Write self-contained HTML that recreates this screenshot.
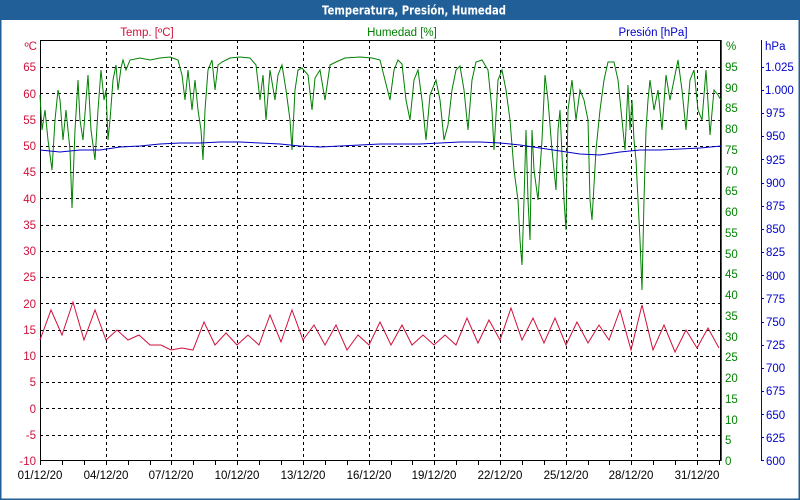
<!DOCTYPE html>
<html><head><meta charset="utf-8"><style>
html,body{margin:0;padding:0;width:800px;height:500px;overflow:hidden;background:#fff}
</style></head><body>
<svg width="800" height="500" xmlns="http://www.w3.org/2000/svg" font-family="Liberation Sans, sans-serif" font-size="11.5">
<rect x="0" y="0" width="800" height="500" fill="#fff"/>
<rect x="0" y="0" width="800" height="20" fill="#215f98"/>
<rect x="0" y="0" width="1.5" height="500" fill="#215f98"/>
<rect x="798.5" y="0" width="1.5" height="500" fill="#215f98"/>
<rect x="0" y="498.5" width="800" height="1.5" fill="#215f98"/>
<text x="414" y="14.5" fill="#fff" font-weight="bold" font-size="12" font-family="DejaVu Sans, sans-serif" text-anchor="middle" textLength="184" lengthAdjust="spacingAndGlyphs">Temperatura, Presión, Humedad</text>
<text x="147" y="36" fill="#d0103a" text-anchor="middle">Temp. [ºC]</text>
<text x="402" y="36" fill="#008000" text-anchor="middle">Humedad [%]</text>
<text x="653" y="36" fill="#0000c8" text-anchor="middle">Presión [hPa]</text>
<g stroke="#000" stroke-width="1" stroke-dasharray="3,3" fill="none">
<path d="M40 67.5H721M40 93.5H721M40 120.5H721M40 146.5H721M40 172.5H721M40 198.5H721M40 225.5H721M40 251.5H721M40 277.5H721M40 303.5H721M40 330.5H721M40 356.5H721M40 382.5H721M40 408.5H721M40 435.5H721"/>
<path d="M106.5 40V461M171.5 40V461M237.5 40V461M303.5 40V461M369.5 40V461M434.5 40V461M500.5 40V461M566.5 40V461M631.5 40V461M697.5 40V461"/>
</g>
<rect x="40.5" y="40.5" width="680" height="420" fill="none" stroke="#000"/>
<path stroke="#000" d="M62.5 461v4M84.5 461v4M128.5 461v4M150.5 461v4M193.5 461v4M215.5 461v4M259.5 461v4M281.5 461v4M325.5 461v4M347.5 461v4M391.5 461v4M412.5 461v4M456.5 461v4M478.5 461v4M522.5 461v4M544.5 461v4M588.5 461v4M609.5 461v4M653.5 461v4M675.5 461v4M40.5 461v4M106.5 461v4M171.5 461v4M237.5 461v4M303.5 461v4M369.5 461v4M434.5 461v4M500.5 461v4M566.5 461v4M631.5 461v4M697.5 461v4M719.5 461v4"/>
<g fill="#000" text-anchor="middle">
<text x="40" y="479">01/12/20</text><text x="106" y="479">04/12/20</text><text x="171" y="479">07/12/20</text><text x="237" y="479">10/12/20</text><text x="303" y="479">13/12/20</text><text x="369" y="479">16/12/20</text><text x="434" y="479">19/12/20</text><text x="500" y="479">22/12/20</text><text x="566" y="479">25/12/20</text><text x="631" y="479">28/12/20</text><text x="697" y="479">31/12/20</text>
</g>
<g fill="#d0103a" text-anchor="end">
<text x="37" y="50">ºC</text>
<text x="36" y="71">65</text><text x="36" y="98">60</text><text x="36" y="124">55</text><text x="36" y="150">50</text><text x="36" y="176">45</text><text x="36" y="203">40</text><text x="36" y="229">35</text><text x="36" y="255">30</text><text x="36" y="281">25</text><text x="36" y="308">20</text><text x="36" y="334">15</text><text x="36" y="360">10</text><text x="36" y="386">5</text><text x="36" y="413">0</text><text x="36" y="439">-5</text><text x="36" y="465">-10</text>
</g>
<path stroke="#008000" d="M721.5 40V461"/>
<g fill="#008000">
<text x="726" y="50">%</text>
<text x="725" y="71">95</text><text x="725" y="92">90</text><text x="725" y="112">85</text><text x="725" y="133">80</text><text x="725" y="154">75</text><text x="725" y="175">70</text><text x="725" y="195">65</text><text x="725" y="216">60</text><text x="725" y="237">55</text><text x="725" y="258">50</text><text x="725" y="278">45</text><text x="725" y="299">40</text><text x="725" y="320">35</text><text x="725" y="341">30</text><text x="725" y="361">25</text><text x="725" y="382">20</text><text x="725" y="403">15</text><text x="725" y="424">10</text><text x="725" y="444">5</text><text x="725" y="465">0</text>
</g>
<path stroke="#0000c8" d="M761.5 40V461M761 67.5h3M761 90.5h3M761 113.5h3M761 136.5h3M761 159.5h3M761 183.5h3M761 206.5h3M761 229.5h3M761 252.5h3M761 275.5h3M761 298.5h3M761 322.5h3M761 345.5h3M761 368.5h3M761 391.5h3M761 414.5h3M761 437.5h3M761 460.5h3"/>
<g fill="#0000c8">
<text x="765" y="50">hPa</text>
<text x="765" y="71">1.025</text><text x="765" y="94">1.000</text><text x="766" y="117">975</text><text x="766" y="140">950</text><text x="766" y="164">925</text><text x="766" y="187">900</text><text x="766" y="210">875</text><text x="766" y="233">850</text><text x="766" y="256">825</text><text x="766" y="280">800</text><text x="766" y="303">775</text><text x="766" y="326">750</text><text x="766" y="349">725</text><text x="766" y="372">700</text><text x="766" y="395">675</text><text x="766" y="419">650</text><text x="766" y="442">625</text><text x="766" y="465">600</text>
</g>
<polyline fill="none" stroke="#008000" stroke-width="1" points="40,95 42,130 45,110 48,140 52,170 55,120 58,90 60,100 63,140 66,110 70,150 72,208 75,130 78,80 80,120 83,140 86,100 88,75 91,130 95,160 98,110 101,70 104,100 106,90 108,140 110,120 113,80 116,65 118,90 121,68 123,60 126,70 130,60 140,58 150,60 160,58 170,57 178,60 182,75 185,100 188,70 192,110 195,80 198,110 201,130 203,160 205,110 208,70 212,60 215,90 218,65 222,62 230,58 240,57 250,58 256,65 260,100 263,75 266,120 270,70 275,100 278,75 282,65 286,90 290,120 292,150 295,90 298,70 302,68 308,75 312,110 315,78 320,70 325,100 330,65 336,62 345,58 360,57 372,58 380,60 385,80 390,100 394,70 398,60 402,64 406,100 410,120 414,80 418,70 422,100 426,140 430,95 436,80 440,100 444,140 448,125 452,90 456,70 460,66 464,90 468,130 472,80 476,62 482,60 488,70 492,110 494,150 498,80 502,70 506,90 510,120 514,170 518,200 520,240 522,265 524,200 526,130 528,200 530,240 532,130 534,170 538,200 542,140 545,75 548,100 552,150 556,190 558,130 560,110 564,200 566,230 568,110 572,80 576,120 580,90 584,100 588,120 590,200 592,220 596,150 600,110 604,80 608,62 614,62 618,80 622,120 625,150 628,85 630,130 632,100 634,140 636,160 638,200 640,240 642,290 644,200 646,130 648,100 650,80 654,110 658,90 662,130 666,75 670,100 674,80 678,60 682,90 686,130 690,80 694,70 698,110 702,120 706,70 710,135 714,90 718,95 721,100"/>
<polyline fill="none" stroke="#0000c8" stroke-width="1" points="40,150 60,152 80,150 100,150 120,147 140,146 160,144 180,143 200,143 220,142 240,142 260,143 280,144 300,146 320,147 340,146 360,145 380,144 400,144 420,144 440,143 460,142 480,142 500,143 520,145 540,148 560,151 580,154 600,155 620,152 640,150 660,150 680,149 700,148 721,146"/>
<polyline fill="none" stroke="#d0103a" stroke-width="1" points="40,340 51,310 62,335 73,302 84,340 95,310 106,340 117,330 128,340 139,335 150,345 161,345 171,350 182,348 193,350 204,322 215,345 226,333 237,345 248,335 259,345 270,315 281,342 292,310 303,340 314,325 325,345 336,325 347,350 358,335 369,345 380,322 391,345 402,325 412,345 423,335 434,345 445,335 456,345 467,318 478,343 489,320 500,340 511,308 522,340 533,318 544,343 555,318 566,345 577,322 588,343 599,325 609,340 620,310 631,350 642,305 653,350 664,325 675,352 686,330 697,348 708,328 719,348"/>
</svg>
</body></html>
